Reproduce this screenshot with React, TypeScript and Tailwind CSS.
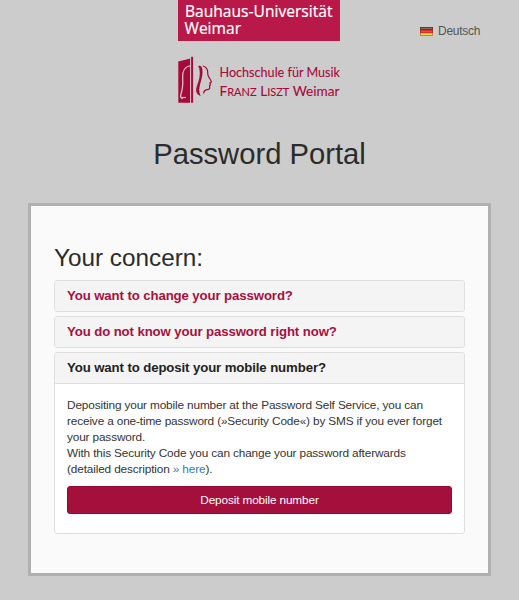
import { ReactNode } from "react";

const UniversityLogo = () => (
  <svg className="block h-[41px] w-[162px]" viewBox="0 0 162 41">
    <rect width="162" height="41" fill="#b81949" />
    <g fill="#fff" stroke="#fff" strokeWidth="0.2" fontFamily="'Open Sans', 'Noto Sans', sans-serif" fontSize="15.5">
      <text x="7" y="17.3" textLength="147.5" lengthAdjust="spacingAndGlyphs">
        Bauhaus-Universität
      </text>
      <text x="6.5" y="33.5" textLength="56.5" lengthAdjust="spacingAndGlyphs">
        Weimar
      </text>
    </g>
  </svg>
);

const MusicLogo = () => (
  <svg className="block h-12 w-[170px] overflow-visible" viewBox="0 0 170 48">
    <path d="M.3 5.5 12.3 2.5V46.8H.3Z" fill="#a8083a" />
    <path
      d="M5 42.2C2.6 42.6 2.2 40.5 3 38c1.8-5.5 2-10.5 1.7-16C4.3 14.5 6.5 10 14.5 9.3"
      fill="none"
      stroke="#d0c3c7"
      strokeWidth="1.3"
    />
    <path d="M3 41.5h5" stroke="#d0c3c7" strokeWidth="1.2" />
    <path d="M12.5 2v45" stroke="#ccc" strokeWidth=".7" />
    <path d="M13.1.8h2v46h-2Z" fill="#a8083a" />
    <path
      d="M20.2 10c2.2-1 3.8.7 4.2 3.5.5 4-.3 7.5-1.4 11.5-1.2 4.5-2.3 8-1.5 11.5.3 1.4.7 2.2 1.3 3.2-3.3-.4-5-3.2-4.6-6.7.5-4 2.5-7 3.2-11.5.7-4.5.5-9-1.2-11.5Z"
      fill="#a8083a"
    />
    <path
      d="M24.8 10c2.7.6 4.2 2.3 4.7 4.7.4 2-.1 3.5.8 5.3.8 2 2.2 3.3 3 5.5.2 1-.5 1.3-1.5 1.5l.6 1.8-.9 1 .3 2.4c-.4 1.5-1.700 1.600-3.500 1.700-1.600.2-2.300 1.500-2.800 3.400"
      fill="none"
      stroke="#a8083a"
      strokeWidth="1.2"
    />
    <g fill="#a8083a" stroke="#a8083a" strokeWidth="0.1" fontFamily="Lato, sans-serif">
      <text x="41.5" y="20.7" fontSize="13" textLength="120.5" lengthAdjust="spacingAndGlyphs">
        Hochschule für Musik
      </text>
      <text x="41.5" y="39.7" fontSize="13" textLength="120" lengthAdjust="spacingAndGlyphs">
        F<tspan fontSize="10.5">RANZ</tspan> L<tspan fontSize="10.5">ISZT</tspan> Weimar
      </text>
    </g>
  </svg>
);

const GermanFlag = () => (
  <svg className="h-[9px] w-[13px]" viewBox="0 0 13 9">
    <rect width="13" height="3" fill="#494640" />
    <rect y="3" width="13" height="3" fill="#e22a22" />
    <rect y="6" width="13" height="3" fill="#f6c624" />
    <rect x="1" y="1" width="11" height="1" fill="#777166" />
    <rect x="1" y="4" width="11" height="1" fill="#f0483c" />
    <rect x="1" y="7" width="11" height="1" fill="#ffdc48" />
    <rect x=".5" y=".5" width="12" height="8" fill="none" stroke="#6f3520" strokeOpacity=".4" />
  </svg>
);

const Panel = ({ title, children }: { title: string; children?: ReactNode }) => (
  <section className="overflow-hidden rounded-[3px] border border-[#dfdfdf] bg-white">
    <h3
      className={
        children
          ? "h-[31px] border-b border-[#dfdfdf] bg-[#f4f4f4] pl-3 text-[13.2px] leading-[30px] font-bold tracking-[-0.1px] text-[#222]"
          : "h-[30px] bg-[#f4f4f4] pl-3 text-[13.2px] leading-[30px] font-bold tracking-[-0.1px] text-[#a90f3d]"
      }
    >
      {title}
    </h3>
    {children}
  </section>
);

export default function App() {
  return (
    <div className="h-[600px] w-[519px] overflow-hidden bg-[#ccc] font-['Liberation_Sans',Arial,sans-serif] text-[#333]">
      <header className="grid h-[203px] grid-cols-[178px_164px_1fr] grid-rows-[105px_1fr]">
        <div className="col-start-2">
          <UniversityLogo />
          <div className="pt-[15px]">
            <MusicLogo />
          </div>
        </div>
        <a
          href="#"
          className="mt-[23px] ml-[78px] flex h-4 items-center gap-[5px] text-[12px] tracking-[-0.25px] text-[#555]"
        >
          <GermanFlag />
          Deutsch
        </a>
        <h1 className="col-span-3 mt-[31px] text-center text-[29.2px] leading-9 text-[#2b2b2b]">Password Portal</h1>
      </header>
      <main className="mx-7 h-[373px] w-[463px] border-[3.5px] border-[#b0b0b0] bg-[#fafafa] px-[23px] pt-[38px]">
        <h2 className="mb-2 text-[24.3px] leading-[28px] text-[#2b2b2b]">Your concern:</h2>
        <div className="flex flex-col gap-1">
          <Panel title="You want to change your password?" />
          <Panel title="You do not know your password right now?" />
          <Panel title="You want to deposit your mobile number?">
            <div className="h-[149px] px-3 pt-[13px] text-[11.8px] leading-4 tracking-[-0.14px]">
              <p className="whitespace-nowrap">
                Depositing your mobile number at the Password Self Service, you can
                <br />
                receive a one-time password (»Security Code«) by SMS if you ever forget
                <br />
                your password.
                <br />
                With this Security Code you can change your password afterwards
                <br />
                (detailed description{" "}
                <a href="#" className="text-[#337ab7]">
                  » here
                </a>
                ).
              </p>
              <button className="mt-[9px] block h-7 w-full rounded-[3px] border border-[#920b32] bg-[#a50f3c] text-white">
                Deposit mobile number
              </button>
            </div>
          </Panel>
        </div>
      </main>
    </div>
  );
}
